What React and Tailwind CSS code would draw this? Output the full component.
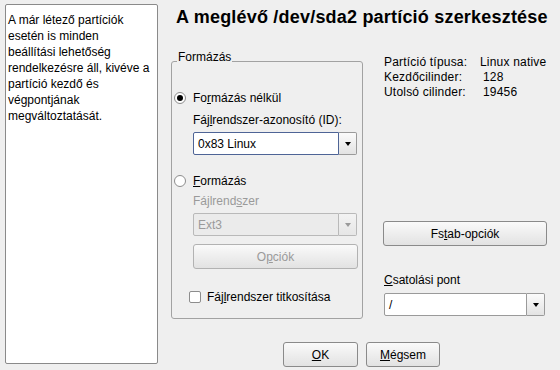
import React from "react";

function Radio({ checked }) {
  return (
    <span className="w-[12px] h-[12px] rounded-full border border-[#8d8d8d] bg-white flex items-center justify-center shrink-0">
      {checked && <span className="w-[6px] h-[6px] rounded-full bg-black" />}
    </span>
  );
}

function Combo({ value, focused, disabled, className = "" }) {
  return (
    <div className={`flex h-[23px] ${className}`}>
      <div
        className={`flex-1 flex items-center pl-[4px] border rounded-l-[2px] ${
          focused
            ? "border-[#4e6496] bg-white text-black"
            : disabled
            ? "border-[#b9b9b9] bg-[#ebebeb] text-[#9a9a9a]"
            : "border-[#9a9a9a] bg-white text-black"
        }`}
      >
        {value}
      </div>
      <div
        className={`w-[18px] flex items-center justify-center border border-l-0 rounded-r-[2px] bg-gradient-to-b ${
          disabled
            ? "border-[#b9b9b9] from-[#f3f3f3] to-[#e6e6e6]"
            : "border-[#9a9a9a] from-[#fbfbfb] to-[#e3e3e3]"
        }`}
      >
        <span
          className={`w-0 h-0 border-l-[3px] border-r-[3px] border-t-[4px] border-l-transparent border-r-transparent ${
            disabled ? "border-t-[#9a9a9a]" : "border-t-black"
          }`}
        />
      </div>
    </div>
  );
}

function Button({ children, disabled, className = "" }) {
  return (
    <button
      type="button"
      className={`h-[25px] flex items-center justify-center border rounded-[3px] bg-gradient-to-b from-[#fafafa] to-[#e2e2e2] ${
        disabled ? "border-[#b2b2b2] text-[#9a9a9a]" : "border-[#8a8a8a] text-black"
      } ${className}`}
    >
      {children}
    </button>
  );
}

export default function App() {
  return (
    <div
      className="w-[560px] h-[370px] bg-[#efefef] flex text-[12px] leading-[14px] text-black overflow-hidden"
      style={{ fontFamily: '"Liberation Sans", Arial, sans-serif' }}
    >
      {/* help panel */}
      <div className="ml-[5px] mt-[4px] w-[153px] h-[360px] border border-[#8a8a8a] rounded-[2px] bg-white px-[2px] pt-[7px] leading-[16px] whitespace-nowrap shrink-0">
        A már létező partíciók
        <br />
        esetén is minden
        <br />
        beállítási lehetőség
        <br />
        rendelkezésre áll, kivéve a
        <br />
        partíció kezdő és
        <br />
        végpontjának
        <br />
        megváltoztatását.
      </div>

      <div className="flex flex-col">
        <h1 className="pt-[6px] pl-[18px] h-[28px] text-[18px] leading-[22px] font-bold tracking-[0.2px] whitespace-nowrap">
          A meglévő /dev/sda2 partíció szerkesztése
        </h1>

        <div className="flex items-start mt-[27px]">
          {/* Formázás group */}
          <div className="relative ml-[13px] mt-[6px] w-[192px] h-[258px] border border-[#a2a2a2] rounded-[3px] flex flex-col">
            <span className="absolute -top-[11px] left-[5px] bg-[#efefef] px-[1px] leading-[12px]">
              Formázás
            </span>

            <div className="flex items-center mt-[29px] ml-[2px] h-[14px]">
              <Radio checked />
              <span className="ml-[7px]">
                Fo<span className="underline">r</span>mázás nélkül
              </span>
            </div>
            <div className="ml-[21px] mt-[8px] h-[14px]">
              Fáj<span className="underline">l</span>rendszer-azonosító (ID):
            </div>
            <Combo value="0x83 Linux" focused className="ml-[21px] mr-[5px] mt-[5px]" />

            <div className="flex items-center mt-[19px] ml-[2px] h-[14px]">
              <Radio />
              <span className="ml-[7px]">
                <span className="underline">F</span>ormázás
              </span>
            </div>
            <div className="ml-[21px] mt-[6px] h-[14px] text-[#9a9a9a]">
              Fájlrend<span className="underline">s</span>zer
            </div>
            <Combo value="Ext3" disabled className="ml-[21px] mr-[5px] mt-[5px]" />
            <Button disabled className="ml-[21px] mr-[4px] mt-[8px]">
              O<span className="underline">p</span>ciók
            </Button>

            <div className="flex items-center mt-[21px] ml-[17px] h-[14px]">
              <span className="w-[12px] h-[12px] border border-[#8d8d8d] rounded-[2px] bg-white shrink-0" />
              <span className="ml-[6px]">
                Fáj<span className="underline">l</span>rendszer titkosítása
              </span>
            </div>
          </div>

          {/* info column */}
          <div className="ml-[20px] w-[165px] flex flex-col">
            <div className="pl-[1px] leading-[15px] tracking-[0.2px]">
              <div className="flex">
                <span className="w-[96px]">Partíció típusa:</span>
                <span>Linux native</span>
              </div>
              <div className="flex">
                <span className="w-[99px]">Kezdőcilinder:</span>
                <span>128</span>
              </div>
              <div className="flex">
                <span className="w-[99px]">Utolsó cilinder:</span>
                <span>19456</span>
              </div>
            </div>

            <Button className="mt-[121px] w-[164px]">
              Fs<span className="underline">t</span>ab-opciók
            </Button>

            <div className="mt-[27px] pl-[1px] h-[14px]">
              <span className="underline">C</span>satolási pont
            </div>
            <Combo value="/" className="mt-[6px] ml-[1px] w-[161px] h-[22px]" />
          </div>
        </div>

        <div className="flex mt-[23px] ml-[125px] gap-[8px]">
          <Button className="w-[75px]">
            <span className="underline">O</span>K
          </Button>
          <Button className="w-[74px]">
            <span className="underline">M</span>égsem
          </Button>
        </div>
      </div>
    </div>
  );
}
